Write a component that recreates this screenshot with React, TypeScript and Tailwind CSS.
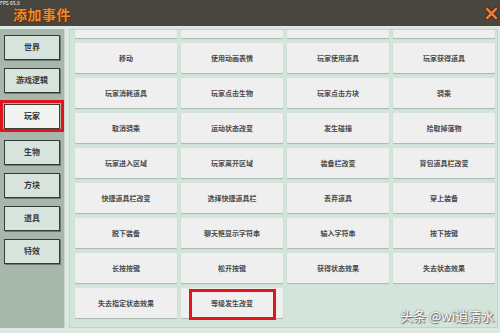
import { useState } from 'react';

const CATEGORIES = ['世界', '游戏逻辑', '玩家', '生物', '方块', '道具', '特效'];

const EVENTS = [
    '', '', '', '',
    '移动', '使用动画表情', '玩家使用道具', '玩家获得道具',
    '玩家消耗道具', '玩家点击生物', '玩家点击方块', '骑乘',
    '取消骑乘', '运动状态改变', '发生碰撞', '拾取掉落物',
    '玩家进入区域', '玩家离开区域', '装备栏改变', '背包道具栏改变',
    '快捷道具栏改变', '选择快捷道具栏', '丢弃道具', '穿上装备',
    '脱下装备', '聊天框显示字符串', '输入字符串', '按下按键',
    '长按按键', '松开按键', '获得状态效果', '失去状态效果',
    '失去指定状态效果', '等级发生改变'
];

const font = { fontFamily: '"Noto Sans CJK SC", "Noto Sans", sans-serif' };

function CloseIcon() {
    return (
        <svg width="13" height="13" viewBox="0 0 13 13">
            <path d="M2 2 L11 11 M11 2 L2 11" stroke="#3a2418" strokeWidth="4.5" strokeLinecap="round" />
            <path d="M2 2 L11 11 M11 2 L2 11" stroke="#f07a32" strokeWidth="2.6" strokeLinecap="round" />
        </svg>
    );
}

export default function App() {
    const [active] = useState('玩家');

    return (
        <div className="w-[500px] h-[333px] bg-[#dce8e1] flex flex-col overflow-hidden relative" style={font}>
            {/* Header */}
            <div className="h-[26px] bg-[#48463e] flex items-center justify-between pl-[13px] pr-[2px] relative">
                <span className="absolute left-0 top-0 text-[5px] leading-[6px] text-white">FPS 65.8</span>
                <span
                    className="text-[14px] leading-[14px] font-bold text-[#f28a26] mt-[2px] tracking-[0.5px]"
                    style={{ textShadow: '0 0 1px #3a2010, 1px 1px 0 #5a3010' }}
                >
                    添加事件
                </span>
                <CloseIcon />
            </div>

            <div className="flex flex-1 pt-[3px] pb-[5px] gap-[4px] min-h-0">
                {/* Sidebar */}
                <div className="w-[65px] bg-[#a8b7ab] border-r-[1px] border-[#c9d6cd] flex flex-col gap-[7px] pt-[5px] pl-[4px] pr-[4px]">
                    {CATEGORIES.map((c) => (
                        <div
                            key={c}
                            className={
                                c === active
                                    ? 'h-[32px] -mx-[4px] border-[3px] border-[#e0141a] px-[1px] flex items-center'
                                    : 'h-[26px] flex items-center'
                            }
                        >
                            <div
                                className={
                                    c === active
                                        ? 'w-full h-[25px] bg-[#f2f4f2] border border-[#3b403c] flex items-center justify-center text-[8px] font-bold text-[#333]'
                                        : 'w-full h-[25px] bg-[#d6e4dd] border border-[#363b37] shadow-[1px_1px_0_#6d7a70] flex items-center justify-center text-[8px] font-bold text-[#3a3a3a]'
                                }
                            >
                                {c}
                            </div>
                        </div>
                    ))}
                </div>

                {/* Event grid */}
                <div className="flex-1 bg-[#d3e5da] border border-[#bfd3c6] mr-[2px] overflow-hidden relative">
                    <div className="grid grid-cols-4 gap-x-[4px] gap-y-[5px] pl-[5px] pr-[2px] mt-[-22px]">
                        {EVENTS.map((e, i) => (
                            <div
                                key={i}
                                className="h-[30px] bg-[#efefef] rounded-[1px] shadow-[0_1px_1px_#a9b8af] flex items-center justify-center text-[7px] font-bold text-[#4a4a4a]"
                            >
                                {e}
                            </div>
                        ))}
                    </div>
                    {/* annotation box */}
                    <div className="absolute left-[119px] top-[259px] w-[87px] h-[31px] border-[3px] border-[#e3151b]" />
                </div>
            </div>

            <span
                className="absolute left-[400px] top-[306px] text-[13px] text-white"
                style={{ textShadow: '0 0 2px #555, 1px 1px 1px #666' }}
            >
                头条 @wi逍清水
            </span>
        </div>
    );
}
